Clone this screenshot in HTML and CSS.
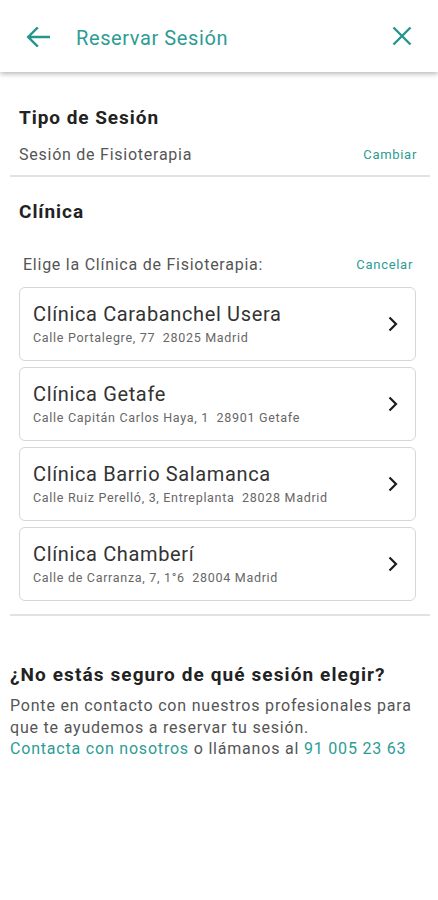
FILE: index.html
```html
<!DOCTYPE html>
<html lang="es">
<head>
<meta charset="utf-8">
<title>Reservar Sesión</title>
<link rel="stylesheet" href="styles.css">
</head>
<body>
<header class="appbar">
  <svg class="icon-back" width="24" height="20" viewBox="0 0 24 20"><path d="M23 10H2.5M11 1.2L2.2 10L11 18.8" fill="none" stroke="#24958e" stroke-width="2.4" stroke-linecap="square"/></svg>
  <h1 class="appbar-title">Reservar Sesión</h1>
  <svg class="icon-close" width="20" height="20" viewBox="0 0 20 20"><path d="M1.5 1.5L18.5 18.5M18.5 1.5L1.5 18.5" fill="none" stroke="#24958e" stroke-width="2.4"/></svg>
</header>

<main>
  <section class="tipo">
    <h2 class="section-title">Tipo de Sesión</h2>
    <div class="row">
      <span class="row-text">Sesión de Fisioterapia</span>
      <a class="small-link">Cambiar</a>
    </div>
  </section>
  <hr class="divider">

  <section class="clinica">
    <h2 class="section-title">Clínica</h2>
    <div class="row row-elige">
      <span class="row-text">Elige la Clínica de Fisioterapia:</span>
      <a class="small-link">Cancelar</a>
    </div>
    <ul class="cards">
      <li class="card">
        <div class="card-body">
          <div class="card-title">Clínica Carabanchel Usera</div>
          <div class="card-addr">Calle Portalegre, 77&nbsp; 28025 Madrid</div>
        </div>
        <svg class="chev" width="10" height="16" viewBox="0 0 10 16"><path d="M1.5 1.5L8 8L1.5 14.5" fill="none" stroke="#1c1c1c" stroke-width="2.2"/></svg>
      </li>
      <li class="card">
        <div class="card-body">
          <div class="card-title">Clínica Getafe</div>
          <div class="card-addr">Calle Capitán Carlos Haya, 1&nbsp; 28901 Getafe</div>
        </div>
        <svg class="chev" width="10" height="16" viewBox="0 0 10 16"><path d="M1.5 1.5L8 8L1.5 14.5" fill="none" stroke="#1c1c1c" stroke-width="2.2"/></svg>
      </li>
      <li class="card">
        <div class="card-body">
          <div class="card-title">Clínica Barrio Salamanca</div>
          <div class="card-addr">Calle Ruiz Perelló, 3, Entreplanta&nbsp; 28028 Madrid</div>
        </div>
        <svg class="chev" width="10" height="16" viewBox="0 0 10 16"><path d="M1.5 1.5L8 8L1.5 14.5" fill="none" stroke="#1c1c1c" stroke-width="2.2"/></svg>
      </li>
      <li class="card">
        <div class="card-body">
          <div class="card-title">Clínica Chamberí</div>
          <div class="card-addr">Calle de Carranza, 7, 1°6&nbsp; 28004 Madrid</div>
        </div>
        <svg class="chev" width="10" height="16" viewBox="0 0 10 16"><path d="M1.5 1.5L8 8L1.5 14.5" fill="none" stroke="#1c1c1c" stroke-width="2.2"/></svg>
      </li>
    </ul>
  </section>
  <hr class="divider divider-bottom">

  <section class="help">
    <h2 class="help-title">¿No estás seguro de qué sesión elegir?</h2>
    <p class="help-text">Ponte en contacto con nuestros profesionales para que te ayudemos a reservar tu sesión.<br><a class="link">Contacta con nosotros</a> o llámanos al <a class="link">91 005 23 63</a></p>
  </section>
</main>
</body>
</html>
```

FILE: styles.css
```css
* { box-sizing: border-box; }

body {
  margin: 0;
  background: #ffffff;
  font-family: Roboto, "Noto Sans", "Liberation Sans", sans-serif;
  color: #222;
}

.appbar {
  height: 72px;
  display: flex;
  align-items: center;
  padding: 0 26px;
  background: #fff;
  box-shadow: 0 2px 5px rgba(0, 0, 0, 0.28);
  position: relative;
}

.icon-back { flex: none; margin-top: 1px; }

.appbar-title {
  margin: 3px 0 0 26px;
  font-size: 20px;
  font-weight: 400;
  letter-spacing: 0.6px;
  color: #2c9c95;
  flex: 1;
  line-height: 24px;
}

.icon-close { flex: none; }

main { display: block; }

.tipo {
  padding: 34px 21px 0 19px;
}

.section-title {
  margin: 0;
  font-size: 19px;
  font-weight: 700;
  letter-spacing: 0.95px;
  line-height: 24px;
  color: #222;
}

.row {
  display: flex;
  justify-content: space-between;
  align-items: center;
  margin-top: 15px;
  line-height: 20px;
}

.row-text {
  font-size: 16px;
  letter-spacing: 0.75px;
  color: #555;
}

.small-link {
  font-size: 13px;
  letter-spacing: 0.7px;
  color: #2c9c95;
}

.divider {
  border: 0;
  height: 2px;
  background: #e2e2e2;
  margin: 10px 8px 0 10px;
}

.clinica {
  padding: 23px 0 0 19px;
}

.row-elige {
  margin-top: 31px;
  padding: 0 25px 0 4px;
}

.cards {
  list-style: none;
  margin: 12px 22px 0 0;
  padding: 0;
  display: flex;
  flex-direction: column;
  gap: 6px;
}

.card {
  height: 74px;
  border: 1px solid #d6d6d6;
  border-radius: 6px;
  display: flex;
  align-items: center;
  padding: 0 17px 0 13px;
}

.card-body {
  flex: 1;
  display: flex;
  flex-direction: column;
  gap: 4px;
}

.card-title {
  font-size: 20px;
  line-height: 24px;
  letter-spacing: 0.64px;
  color: #333;
}

.card-addr {
  font-size: 12.5px;
  line-height: 16px;
  letter-spacing: 0.7px;
  color: #666;
}

.chev { flex: none; }

.divider-bottom {
  margin-top: 13px;
}

.help {
  padding: 47px 10px 0 10px;
}

.help-title {
  margin: 0;
  font-size: 19px;
  font-weight: 700;
  letter-spacing: 1.1px;
  line-height: 24px;
  color: #222;
}

.help-text {
  margin: 8px 0 0;
  font-size: 16px;
  line-height: 21.5px;
  letter-spacing: 0.8px;
  color: #555;
}

.link {
  color: #2c9c95;
}
```
